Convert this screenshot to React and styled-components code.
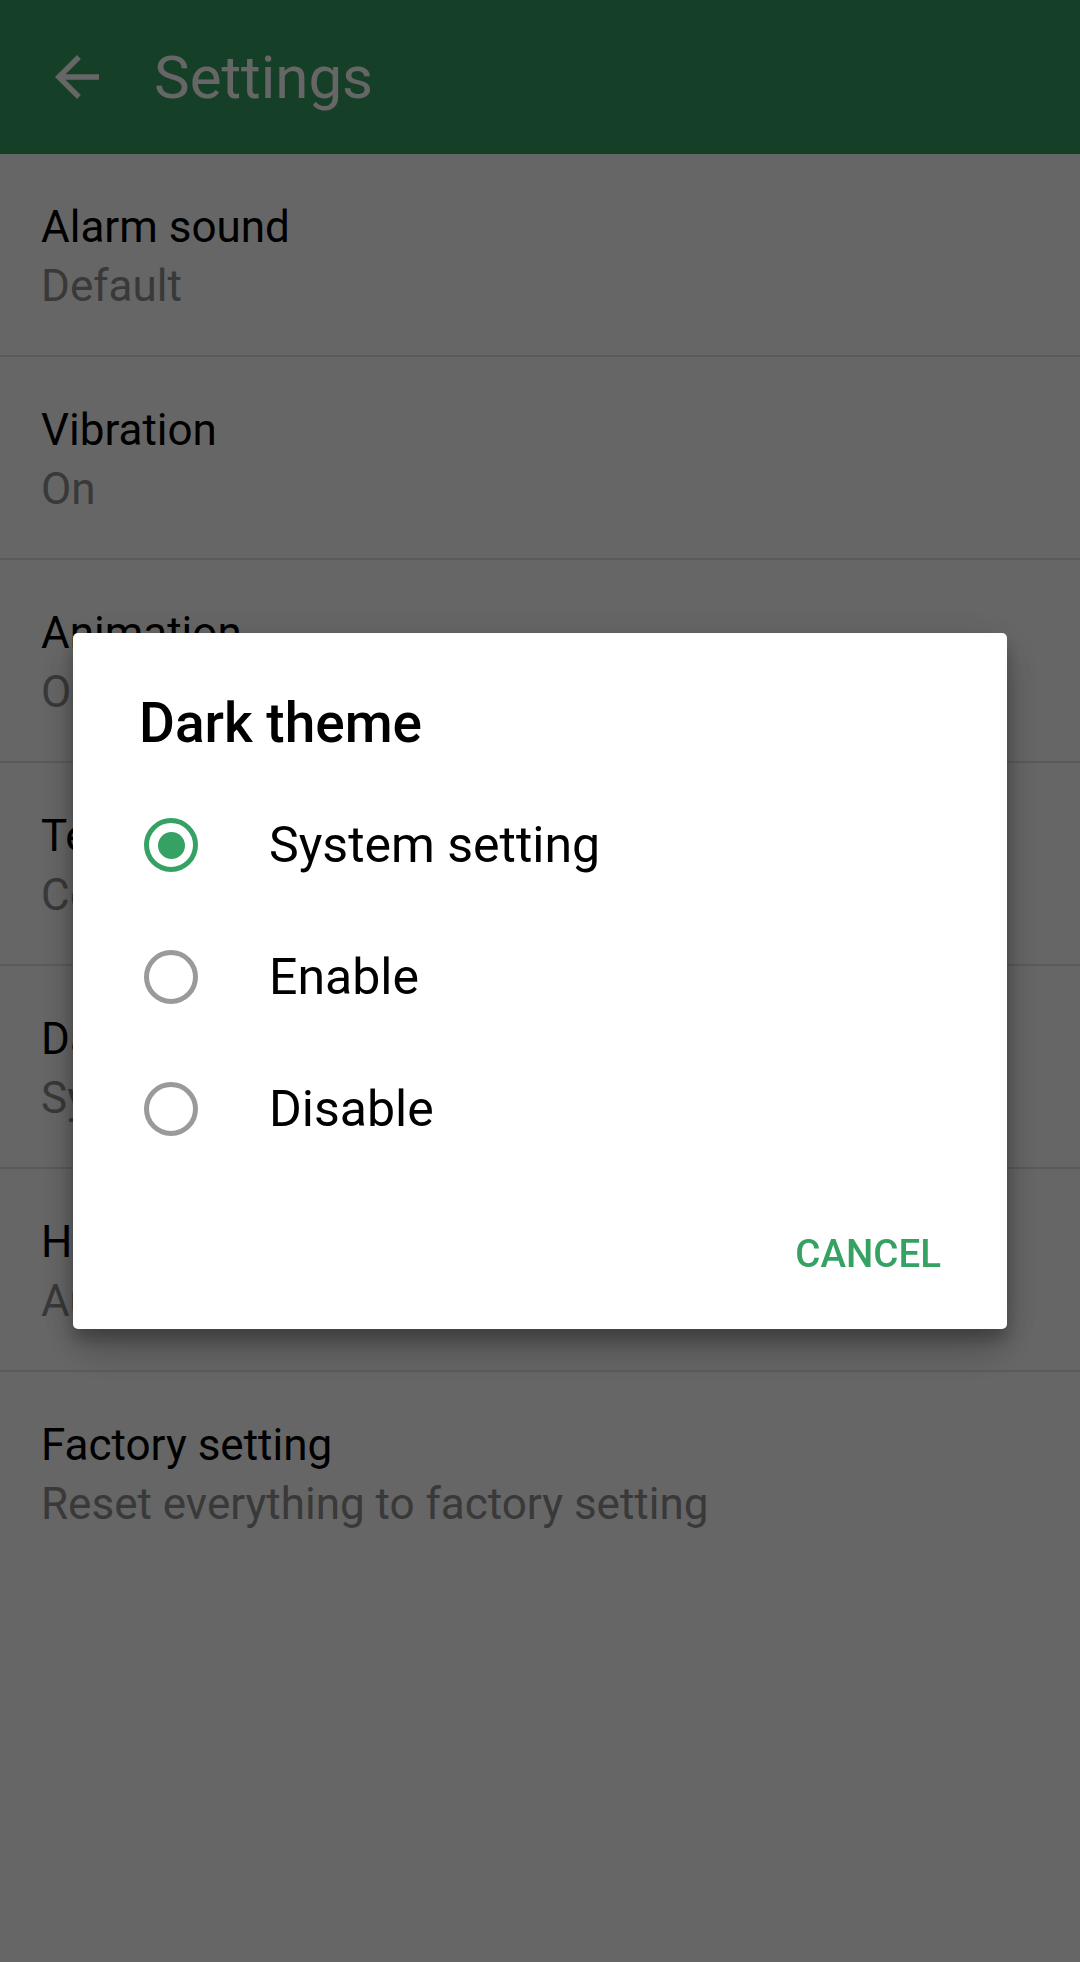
import React from 'react';
import styled, { createGlobalStyle } from 'styled-components';

const GlobalStyle = createGlobalStyle`
  html, body {
    margin: 0;
    padding: 0;
    background: #ffffff;
    font-family: Roboto, 'Noto Sans', 'Liberation Sans', sans-serif;
    -webkit-font-smoothing: antialiased;
  }
  * { box-sizing: border-box; }
`;

const ACCENT = '#35a264';

const Screen = styled.div`
  position: relative;
  min-height: 1962px;
  background: #ffffff;
`;

const AppBar = styled.header`
  display: flex;
  align-items: center;
  height: 154px;
  background: #379e64;
`;

const BackButton = styled.button`
  display: flex;
  align-items: center;
  justify-content: center;
  width: 66px;
  height: 66px;
  margin-left: 44px;
  padding: 0;
  border: 0;
  background: none;
  color: #ffffff;
`;

const AppTitle = styled.h1`
  margin: 0 0 0 44px;
  font-size: 60px;
  font-weight: 400;
  color: #ffffff;
`;

const List = styled.div`
  display: flex;
  flex-direction: column;
`;

const Row = styled.div`
  height: 203px;
  padding: 44px 41px 0;
  border-bottom: ${(p) => (p.last ? '0' : '2.5px solid #e2e2e2')};
`;

const RowTitle = styled.div`
  font-size: 44px;
  line-height: 59px;
  color: #000000;
  white-space: nowrap;
`;

const RowSub = styled.div`
  font-size: 44px;
  line-height: 59px;
  color: #8e8e8e;
  white-space: nowrap;
`;

const Scrim = styled.div`
  position: fixed;
  inset: 0;
  display: flex;
  align-items: center;
  justify-content: center;
  background: rgba(0, 0, 0, 0.6);
`;

const Dialog = styled.div`
  width: 934px;
  height: 696px;
  padding-top: 57px;
  background: #ffffff;
  border-radius: 5px;
  box-shadow: 0 24px 38px rgba(0, 0, 0, 0.16), 0 9px 46px rgba(0, 0, 0, 0.14),
    0 11px 15px rgba(0, 0, 0, 0.22);
  display: flex;
  flex-direction: column;
`;

const DialogTitle = styled.h2`
  margin: 0;
  padding: 0 0 0 66px;
  font-size: 55px;
  line-height: 66px;
  font-weight: 500;
  color: #000000;
`;

const Options = styled.div`
  display: flex;
  flex-direction: column;
  margin-top: 23px;
`;

const Option = styled.label`
  display: flex;
  align-items: center;
  height: 132px;
  padding-left: 71px;
  cursor: pointer;
`;

const RadioRing = styled.span`
  display: flex;
  align-items: center;
  justify-content: center;
  width: 54px;
  height: 54px;
  border-radius: 50%;
  border: 5.5px solid ${(p) => (p.checked ? ACCENT : '#9a9a9a')};
  flex-shrink: 0;
`;

const RadioDot = styled.span`
  width: 27px;
  height: 27px;
  border-radius: 50%;
  background: ${ACCENT};
`;

const OptionLabel = styled.span`
  margin-left: 71px;
  font-size: 50px;
  color: #000000;
`;

const Actions = styled.div`
  display: flex;
  justify-content: flex-end;
  margin-top: 29px;
  padding-right: 44px;
`;

const TextButton = styled.button`
  height: 99px;
  padding: 0 22px;
  border: 0;
  background: none;
  font-family: Roboto, 'Noto Sans', 'Liberation Sans', sans-serif;
  font-size: 38.5px;
  font-weight: 500;
  color: ${ACCENT};
  text-transform: uppercase;
`;

const rows = [
  { title: 'Alarm sound', sub: 'Default' },
  { title: 'Vibration', sub: 'On' },
  { title: 'Animation', sub: 'On' },
  { title: 'Temperature unit', sub: 'Celsius' },
  { title: 'Dark theme', sub: 'System setting' },
  { title: 'Hour format', sub: 'Automatic' },
  { title: 'Factory setting', sub: 'Reset everything to factory setting' },
];

const options = ['System setting', 'Enable', 'Disable'];

const ArrowBack = () => (
  <svg width="66" height="66" viewBox="0 0 24 24" fill="currentColor">
    <path d="M20 11H7.83l5.59-5.59L12 4l-8 8 8 8 1.41-1.41L7.83 13H20v-2z" />
  </svg>
);

export default function App() {
  const [selected, setSelected] = React.useState(0);

  return (
    <Screen>
      <GlobalStyle />
      <AppBar>
        <BackButton aria-label="Back">
          <ArrowBack />
        </BackButton>
        <AppTitle>Settings</AppTitle>
      </AppBar>
      <List>
        {rows.map((r, i) => (
          <Row key={r.title} last={i === rows.length - 1}>
            <RowTitle>{r.title}</RowTitle>
            <RowSub>{r.sub}</RowSub>
          </Row>
        ))}
      </List>

      <Scrim>
        <Dialog>
          <DialogTitle>Dark theme</DialogTitle>
          <Options>
            {options.map((o, i) => (
              <Option key={o} onClick={() => setSelected(i)}>
                <RadioRing checked={selected === i}>
                  {selected === i && <RadioDot />}
                </RadioRing>
                <OptionLabel>{o}</OptionLabel>
              </Option>
            ))}
          </Options>
          <Actions>
            <TextButton>Cancel</TextButton>
          </Actions>
        </Dialog>
      </Scrim>
    </Screen>
  );
}
